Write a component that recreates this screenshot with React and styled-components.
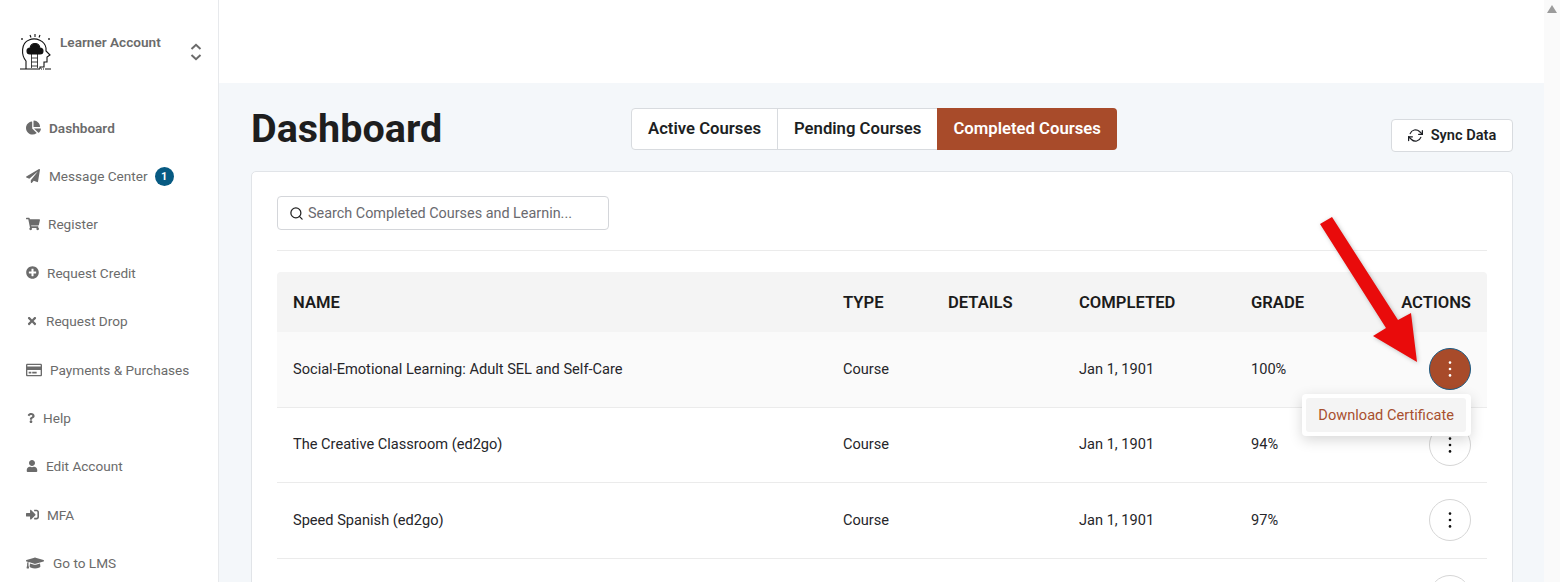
import React from "react";
import styled, { createGlobalStyle } from "styled-components";
import {
  FaChartPie,
  FaPaperPlane,
  FaShoppingCart,
  FaPlusCircle,
  FaTimes,
  FaRegCreditCard,
  FaQuestion,
  FaUser,
  FaSignInAlt,
  FaGraduationCap,
} from "react-icons/fa";
import { FiRefreshCw, FiSearch } from "react-icons/fi";

const NAV = [
  { label: "Dashboard", icon: FaChartPie, box: 23, size: 15, bold: true },
  { label: "Message Center", icon: FaPaperPlane, box: 23, size: 14, badge: 1 },
  { label: "Register", icon: FaShoppingCart, box: 22, size: 14 },
  { label: "Request Credit", icon: FaPlusCircle, box: 21, size: 13 },
  { label: "Request Drop", icon: FaTimes, box: 20, size: 12 },
  { label: "Payments & Purchases", icon: FaRegCreditCard, box: 24, size: 16 },
  { label: "Help", icon: FaQuestion, box: 17, size: 10 },
  { label: "Edit Account", icon: FaUser, box: 20, size: 12 },
  { label: "MFA", icon: FaSignInAlt, box: 21, size: 13 },
  { label: "Go to LMS", icon: FaGraduationCap, box: 27, size: 18 },
];

const COURSES = [
  { name: "Social-Emotional Learning: Adult SEL and Self-Care", grade: "100%", open: true },
  { name: "The Creative Classroom (ed2go)", grade: "94%" },
  { name: "Speed Spanish (ed2go)", grade: "97%" },
  { name: "", grade: "" },
];

function Logo() {
  return (
    <svg width="32" height="38" viewBox="0 0 32 38" fill="none" stroke="#111" strokeWidth="1.1">
      <path d="M6 36 L6 28 C1 22 1 10 9 7 C16 4 25 8 26 15 L26 18 L30 22 L27 24 L27 29 L24 29 L24 34 L20 34 L20 36" />
      <path d="M0 36 L31 36" strokeDasharray="20 1 1 1 1 1" />
      <path
        d="M10 21 C6 21 6 15 10 15 C11 9 19 9 20 15 C24 15 24 21 20 21 Z"
        fill="#111"
      />
      <path d="M11.5 21 L11.5 35 M17.5 21 L17.5 35 M11.5 25 H17.5 M11.5 29 H17.5 M11.5 33 H17.5" strokeWidth="0.8" />
      <path d="M15 1 L15 4 M10 2 L11 4.5 M20 2 L19 4.5" />
      <path d="M2 5 L2 7 M1 6 L3 6 M29 5 L29 7 M28 6 L30 6" strokeWidth="0.8" />
    </svg>
  );
}

function SwitchIcon() {
  return (
    <svg width="12" height="18" viewBox="0 0 12 18" fill="none" stroke="#6b6b6b" strokeWidth="2">
      <path d="M1.5 6 L6 1.8 L10.5 6" />
      <path d="M1.5 12 L6 16.2 L10.5 12" />
    </svg>
  );
}

function Dots() {
  return (
    <svg width="4" height="16" viewBox="0 0 4 16" fill="currentColor">
      <circle cx="2" cy="1.6" r="1.3" />
      <circle cx="2" cy="8" r="1.3" />
      <circle cx="2" cy="14.4" r="1.3" />
    </svg>
  );
}

export default function App() {
  return (
    <>
      <GlobalStyle />
      <Page>
        <Sidebar>
          <Brand>
            <Logo />
            <BrandName>Learner Account</BrandName>
            <Switcher>
              <SwitchIcon />
            </Switcher>
          </Brand>
          <Nav>
            {NAV.map((item) => (
              <NavItem key={item.label} $bold={item.bold}>
                <NavIcon $box={item.box}>
                  <item.icon size={item.size} />
                </NavIcon>
                {item.label}
                {item.badge && <Badge>{item.badge}</Badge>}
              </NavItem>
            ))}
          </Nav>
        </Sidebar>

        <Main>
          <TopBar />
          <Content>
            <HeadRow>
              <Title>Dashboard</Title>
              <Tabs>
                <Tab>Active Courses</Tab>
                <Tab>Pending Courses</Tab>
                <Tab $active>Completed Courses</Tab>
              </Tabs>
              <SyncButton>
                <FiRefreshCw size={15} />
                Sync Data
              </SyncButton>
            </HeadRow>

            <Card>
              <SearchBox>
                <FiSearch size={15} color="#222" />
                <span>Search Completed Courses and Learnin...</span>
              </SearchBox>
              <Divider />
              <HeaderRow>
                <span>NAME</span>
                <span>TYPE</span>
                <span>DETAILS</span>
                <span>COMPLETED</span>
                <span>GRADE</span>
                <ActionsHead>ACTIONS</ActionsHead>
              </HeaderRow>
              {COURSES.map((c, i) => (
                <Row key={i} $open={c.open}>
                  <span>{c.name}</span>
                  <span>{c.name && "Course"}</span>
                  <span />
                  <span>{c.name && "Jan 1, 1901"}</span>
                  <span>{c.grade}</span>
                  <ActionCell>
                    <ActionButton $open={c.open}>
                      <Dots />
                    </ActionButton>
                    {c.open && (
                      <Menu>
                        <MenuItem>Download Certificate</MenuItem>
                      </Menu>
                    )}
                  </ActionCell>
                </Row>
              ))}
            </Card>
          </Content>
        </Main>

        <Scrollbar>
          <ScrollUp />
        </Scrollbar>

        <Arrow width="110" height="160" viewBox="0 0 110 160">
          <polygon
            points="10,15 22,8 88,111 101,104 107,153 63,127 76,119"
            fill="#e90b0b"
          />
        </Arrow>
      </Page>
    </>
  );
}

const GlobalStyle = createGlobalStyle`
  html, body {
    margin: 0;
    padding: 0;
    height: 582px;
    overflow: hidden;
    background: #fff;
    font-family: Roboto, "Liberation Sans", sans-serif;
  }
`;

const Page = styled.div`
  position: relative;
  display: flex;
  width: 1560px;
  height: 582px;
  overflow: hidden;
`;

const Sidebar = styled.aside`
  flex: 0 0 219px;
  box-sizing: border-box;
  padding: 33px 0 0 20px;
  background: #fff;
  border-right: 1px solid #e7e9ec;
`;

const Brand = styled.div`
  display: flex;
  align-items: flex-start;
  height: 70.5px;
`;

const BrandName = styled.div`
  width: 130px;
  margin-left: 8px;
  padding-top: 1px;
  font-size: 13.6px;
  line-height: 16px;
  font-weight: 600;
  color: #6b6b6b;
`;

const Switcher = styled.div`
  display: flex;
  margin-top: 10px;
  color: #6b6b6b;
`;

const Nav = styled.nav`
  display: flex;
  flex-direction: column;
  padding-left: 6px;
`;

const NavItem = styled.div`
  display: flex;
  align-items: center;
  height: 48.4px;
  font-size: 13.6px;
  color: #6b6b6b;
  font-weight: ${(p) => (p.$bold ? 600 : 400)};
  white-space: nowrap;
`;

const NavIcon = styled.span`
  display: inline-flex;
  align-items: center;
  width: ${(p) => p.$box}px;
  flex: none;
`;

const Badge = styled.span`
  display: inline-flex;
  align-items: center;
  justify-content: center;
  width: 19px;
  height: 19px;
  margin-left: 7px;
  border-radius: 50%;
  background: #075a82;
  color: #fff;
  font-size: 11px;
  font-weight: 700;
`;

const Main = styled.main`
  flex: 1;
  display: flex;
  flex-direction: column;
  min-width: 0;
  background: #f4f7fa;
`;

const TopBar = styled.div`
  flex: 0 0 83px;
  background: #fff;
`;

const Content = styled.div`
  padding: 25px 31px 0 32px;
`;

const HeadRow = styled.div`
  display: flex;
  align-items: flex-start;
  height: 63px;
`;

const Title = styled.h1`
  width: 380px;
  margin: 0;
  font-size: 39.5px;
  line-height: 41px;
  font-weight: 700;
  color: #1e1e1e;
`;

const Tabs = styled.div`
  display: flex;
  height: 42px;
  box-sizing: border-box;
  border: 1px solid #d8dbdf;
  border-radius: 4px;
  background: #fff;
`;

const Tab = styled.div`
  display: flex;
  align-items: center;
  padding: 0 16px 2px;
  font-size: 16.7px;
  font-weight: 600;
  color: ${(p) => (p.$active ? "#fff" : "#1d1f24")};
  background: ${(p) => (p.$active ? "#a84b2a" : "transparent")};
  border-radius: ${(p) => (p.$active ? "0 4px 4px 0" : "0")};
  margin: ${(p) => (p.$active ? "-1px -1px -1px 0" : "0")};

  &:first-child {
    border-right: 1px solid #d8dbdf;
  }
`;

const SyncButton = styled.div`
  display: flex;
  align-items: center;
  justify-content: center;
  gap: 8px;
  width: 122px;
  height: 33px;
  box-sizing: border-box;
  margin: 11px 0 0 auto;
  padding-bottom: 1px;
  border: 1px solid #d8dbdf;
  border-radius: 4px;
  background: #fff;
  font-size: 14.6px;
  font-weight: 600;
  color: #1d1f24;
`;

const Card = styled.section`
  box-sizing: border-box;
  height: 500px;
  padding: 24px 25px;
  background: #fff;
  border: 1px solid #e1e4e8;
  border-radius: 5px;
`;

const SearchBox = styled.div`
  display: flex;
  align-items: center;
  gap: 4px;
  width: 332px;
  height: 34px;
  box-sizing: border-box;
  padding-left: 11px;
  border: 1px solid #d4d6da;
  border-radius: 4px;
  font-size: 14.4px;
  color: #6a6a6f;
`;

const Divider = styled.div`
  height: 1px;
  margin: 20px 0 21px;
  background: #ebebeb;
`;

const columns = "550px 105px 131px 172px 1fr 100px";

const HeaderRow = styled.div`
  display: grid;
  grid-template-columns: ${columns};
  align-items: center;
  height: 60px;
  padding: 0 16px;
  background: #f4f4f4;
  border-radius: 4px 4px 0 0;
  font-size: 16.6px;
  font-weight: 600;
  color: #1b1b1b;
`;

const ActionsHead = styled.span`
  text-align: right;
`;

const Row = styled.div`
  display: grid;
  grid-template-columns: ${columns};
  align-items: center;
  height: 75.6px;
  box-sizing: border-box;
  padding: 0 16px;
  background: ${(p) => (p.$open ? "#fafafa" : "#fff")};
  border-bottom: 1px solid #ebebeb;
  font-size: 14.6px;
  color: #26262a;

  & > span {
    padding-bottom: 1px;
  }
`;

const ActionCell = styled.div`
  position: relative;
  display: flex;
  justify-content: flex-end;
`;

const ActionButton = styled.div`
  display: flex;
  align-items: center;
  justify-content: center;
  width: 42px;
  height: 42px;
  box-sizing: border-box;
  border-radius: 50%;
  border: 1px solid ${(p) => (p.$open ? "#1d5a82" : "#d6d6d6")};
  background: ${(p) => (p.$open ? "#a84b2a" : "#fff")};
  color: ${(p) => (p.$open ? "#fff" : "#111")};
`;

const Menu = styled.div`
  position: absolute;
  top: 46px;
  right: 0;
  z-index: 2;
  padding: 4px 5px 4px 4px;
  background: #fff;
  border-radius: 4px;
  box-shadow: 0 4px 14px rgba(0, 0, 0, 0.16);
`;

const MenuItem = styled.div`
  display: flex;
  align-items: center;
  height: 34px;
  padding: 0 12px;
  border-radius: 3px;
  background: #f4f4f4;
  font-size: 14.6px;
  color: #a8502f;
  white-space: nowrap;
`;

const Scrollbar = styled.div`
  position: relative;
  flex: 0 0 16px;
  background: #fafafa;
`;

const ScrollUp = styled.div`
  position: absolute;
  top: 5px;
  left: 3px;
  border-left: 5px solid transparent;
  border-right: 5px solid transparent;
  border-bottom: 8px solid #9b9b9b;
`;

const Arrow = styled.svg`
  position: absolute;
  top: 209px;
  left: 1310px;
  z-index: 3;
  filter: drop-shadow(1px 1px 2px rgba(0, 0, 0, 0.25));
`;
